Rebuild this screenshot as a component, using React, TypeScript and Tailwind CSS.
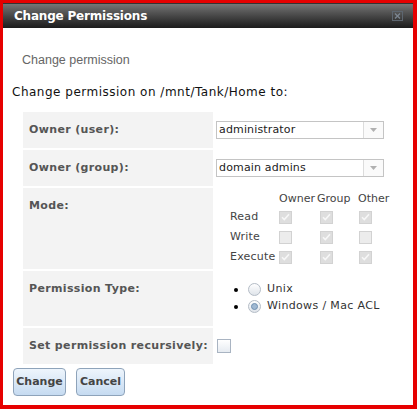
import React from "react";

const font = { verdana: "font-['Verdana','DejaVu_Sans',sans-serif]" };

function Select({ value }: { value: string }) {
  return (
    <div className="flex h-[18px] w-[168px] items-stretch border border-[#c4c4c4] bg-white">
      <div className="flex flex-1 items-center pl-[2px] text-[11px] tracking-[0.15px] text-[#222]">
        {value}
      </div>
      <div className="flex w-[20px] items-center justify-center border-l border-[#dcdcdc] bg-[#fafafa]">
        <svg width="7" height="4" viewBox="0 0 7 4">
          <path d="M0 0h7L3.5 4z" fill="#b0b0b0" />
        </svg>
      </div>
    </div>
  );
}

function Check({ on }: { on: boolean }) {
  return (
    <div
      className={`flex h-[13px] w-[13px] items-center justify-center border border-[#d2d2d2] ${
        on ? "bg-[#dedede]" : "bg-[#ececec]"
      }`}
    >
      {on && (
        <svg width="9" height="8" viewBox="0 0 9 8">
          <path
            d="M1 4.2l2.3 2.3L8 1.2"
            fill="none"
            stroke="#f7f7f7"
            strokeWidth="1.6"
          />
        </svg>
      )}
    </div>
  );
}

function Radio({ on }: { on: boolean }) {
  return (
    <div className="flex h-[13px] w-[13px] items-center justify-center rounded-full border border-[#b4bcc6] bg-gradient-to-b from-[#ffffff] to-[#dfe4ea]">
      {on && <div className="h-[7px] w-[7px] rounded-full border border-[#6f8fb0] bg-[#9fb8d2]" />}
    </div>
  );
}

function Label({ children }: { children: React.ReactNode }) {
  return (
    <div className="whitespace-nowrap bg-[#f3f3f3] pl-[6px] pt-[11px] pb-[11px] text-[11px] leading-[14px] font-bold tracking-[0.35px] text-[#555]">
      {children}
    </div>
  );
}

export default function App() {
  const modes: [string, boolean[]][] = [
    ["Read", [true, true, true]],
    ["Write", [false, true, false]],
    ["Execute", [true, true, true]],
  ];

  return (
    <div className={`h-[409px] w-[417px] bg-[#e60000] pt-[3px] pl-[3px] pr-[4px] pb-[4px] ${font.verdana}`}>
      <div className="flex h-full flex-col bg-white">
        <div className="flex h-[25px] items-center justify-between border-t border-[#333] bg-gradient-to-b from-[#767676] to-[#1c1c1c] pl-[11px] pr-[10px]">
          <span className="text-[12px] font-bold tracking-[-0.2px] text-white">Change Permissions</span>
          <svg width="11" height="10" viewBox="0 0 11 10">
            <rect x="0.5" y="0.5" width="10" height="9" fill="none" stroke="#5d6670" />
            <path d="M3 2.5l5 5M8 2.5l-5 5" stroke="#7b8590" strokeWidth="1.4" />
          </svg>
        </div>

        <div className="pt-[23px] pl-[19px] font-['Liberation_Sans',sans-serif] text-[12.5px] leading-[19px] text-[#666]">
          Change permission
        </div>
        <div className="mt-[13px] pl-[9px] text-[12px] leading-[18px] tracking-[0.5px] text-[#111]">
          Change permission on /mnt/Tank/Home to:
        </div>

        <div className="mt-[11px] ml-[20px] grid grid-cols-[190px_1fr] gap-[2px]">
          <Label>Owner (user):</Label>
          <div className="flex items-center pl-[1px]">
            <Select value="administrator" />
          </div>

          <Label>Owner (group):</Label>
          <div className="flex items-center pl-[1px]">
            <Select value="domain admins" />
          </div>

          <div className="h-[81px] bg-[#f3f3f3]">
            <Label>Mode:</Label>
          </div>
          <div className="pt-[3px] pl-[15px] text-[11px] text-[#444]">
            <div className="grid grid-cols-[49px_38px_41px_auto] leading-[16px]">
              <div />
              <div>Owner</div>
              <div>Group</div>
              <div>Other</div>
            </div>
            {modes.map(([name, vals]) => (
              <div key={name} className="grid h-[20px] grid-cols-[49px_41px_39px_auto] items-center tracking-[0.2px]">
                <div>{name}</div>
                {vals.map((v, i) => (
                  <Check key={i} on={v} />
                ))}
              </div>
            ))}
          </div>

          <div className="h-[55px] bg-[#f3f3f3] pl-[6px] pt-[11px] text-[11px] leading-[14px] font-bold tracking-[0.35px] text-[#555]">
            Permission Type:
          </div>
          <ul className="pt-[10px] pl-[19px] text-[11px] tracking-[0.35px] text-[#333]">
            {[
              ["Unix", false],
              ["Windows / Mac ACL", true],
            ].map(([t, on]) => (
              <li key={t as string} className="flex h-[17px] items-center">
                <span className="mr-[10px] h-[4px] w-[4px] rounded-full bg-black" />
                <Radio on={on as boolean} />
                <span className="ml-[6px]">{t}</span>
              </li>
            ))}
          </ul>

          <Label>Set permission recursively:</Label>
          <div className="flex items-center pl-[2px]">
            <div className="h-[14px] w-[14px] border border-[#a9b4c2] bg-gradient-to-b from-[#ffffff] to-[#e6ebf1]" />
          </div>
        </div>

        <div className="mt-[4px] flex gap-[10px] pl-[10px]">
          {[
            ["Change", "w-[53px]"],
            ["Cancel", "w-[49px]"],
          ].map(([b, w]) => (
            <button
              key={b}
              className={`h-[28px] ${w} rounded-[4px] border border-[#8ea3ba] bg-gradient-to-b from-[#eef5fc] to-[#c6dbf1] text-[11px] font-bold text-[#444]`}
            >
              {b}
            </button>
          ))}
        </div>
      </div>
    </div>
  );
}
